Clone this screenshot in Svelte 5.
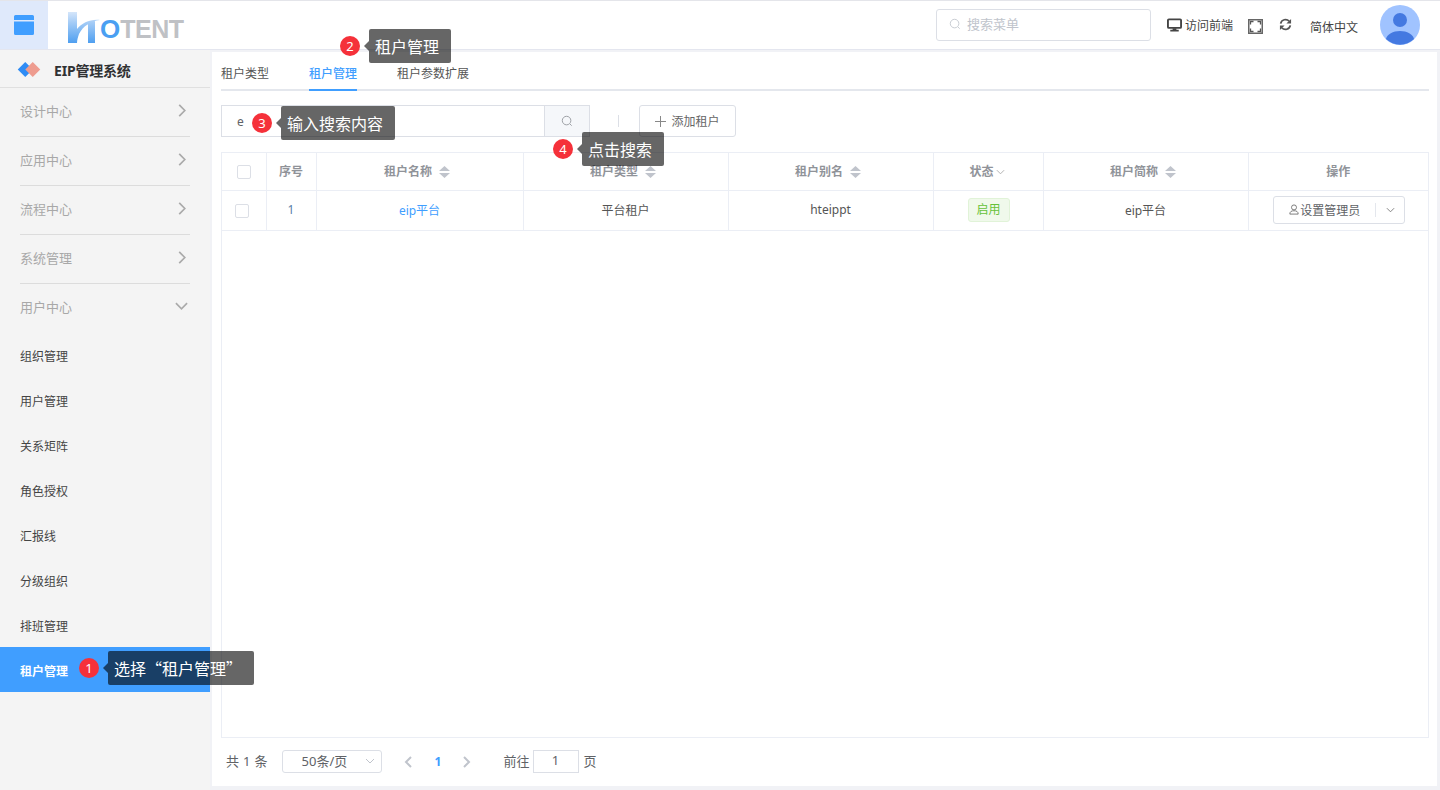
<script lang="ts">
  const groups = ['设计中心', '应用中心', '流程中心', '系统管理'];
  const subs = ['组织管理', '用户管理', '关系矩阵', '角色授权', '汇报线', '分级组织', '排班管理', '租户管理'];
  const tabs = ['租户类型', '租户管理', '租户参数扩展'];
</script>

{#snippet sorter()}
  <svg class="sorter" viewBox="0 0 11 12" width="11" height="12"><path d="M5.500 0l5.500 5H0zM5.500 12L0 7h11z" fill="#c0c4cc"/></svg>
{/snippet}

{#snippet tip(num, text, cls)}
  <div class="tip {cls}">
    <span class="num">{num}</span>
    <span class="bubble">{text}</span>
  </div>
{/snippet}

<div class="page">
  <header class="header">
    <div class="toggle">
      <svg viewBox="0 0 20 20" width="20" height="20"><path d="M1.500 0h17A1.500 1.500 0 0 1 20 1.500V5H0V1.500A1.500 1.500 0 0 1 1.500 0zM0 6.500h20v12a1.500 1.500 0 0 1-1.500 1.500h-17A1.500 1.500 0 0 1 0 18.500z" fill="#409eff"/></svg>
    </div>
    <div class="logo">
      <svg viewBox="0 0 34 32" width="34" height="32">
        <defs>
          <linearGradient id="lg" x1="0" y1="0" x2="0" y2="1">
            <stop offset="0" stop-color="#d5e6fa"/><stop offset=".35" stop-color="#a3cbf6"/><stop offset="1" stop-color="#4f9ff0"/>
          </linearGradient>
        </defs>
        <path d="M0 0h9v17C14 11 22 7 32 8c-9 1-17 6-21 14-1 3-2 6-2 9H0zM20 11l7-2v22h-7z" fill="url(#lg)"/>
      </svg>
      <span class="logo-o">O</span><span class="logo-t">TENT</span>
    </div>
    <div class="spacer"></div>
    <div class="menu-search">
      <svg viewBox="0 0 14 14" width="12" height="12"><circle cx="6.500" cy="6.500" r="5" fill="none" stroke="#c0c4cc" stroke-width="1"/><path d="M10.500 10.500l2 2" stroke="#c0c4cc"/></svg>
      <span>搜索菜单</span>
    </div>
    <div class="front">
      <svg viewBox="0 0 16 14" width="15" height="14"><path d="M2 1h12a1 1 0 0 1 1 1v7a1 1 0 0 1-1 1H2a1 1 0 0 1-1-1V2a1 1 0 0 1 1-1z" fill="none" stroke="#444" stroke-width="2"/><path d="M6 10.500h4V12h2.500v1.800h-9V12H6z" fill="#444"/></svg>
      <span>访问前端</span>
    </div>
    <svg class="full" viewBox="0 0 15 15" width="15" height="15"><rect x=".75" y=".75" width="13.500" height="13.500" fill="none" stroke="#666" stroke-width="1.500"/><path d="M2.500 5.500V2.500h3M9.500 2.500h3v3M12.500 9.500v3h-3M5.500 12.500h-3v-3" fill="none" stroke="#555" stroke-width="1.300"/></svg>
    <svg class="refresh" viewBox="0 0 14 14" width="13" height="13"><path d="M1.800 6A5.300 5.300 0 0 1 11 3.500M12.200 8A5.300 5.300 0 0 1 3 10.500" fill="none" stroke="#555" stroke-width="1.900"/><path d="M13 1v5H8zM1 13V8h5z" fill="#555"/></svg>
    <span class="lang">简体中文</span>
    <div class="avatar">
      <svg viewBox="0 0 40 40" width="40" height="40"><circle cx="20" cy="20" r="20" fill="#a0c3ff"/><circle cx="20" cy="15" r="7" fill="#4479e1"/><path d="M6 34c1-4.500 7-8 14-8s13 3.500 14 8a20 20 0 0 1-28 0z" fill="#4479e1"/></svg>
    </div>
  </header>

  <div class="body">
    <aside class="sidebar">
      <div class="brand">
        <svg viewBox="0 0 24 16" width="24" height="15"><path d="M8 0l8 8-8 8-8-8z" fill="#2f8cf5"/><path d="M16 0l8 8-8 8-8-8z" fill="#ee9c8f"/></svg>
        <span>EIP管理系统</span>
      </div>
      <nav class="groups">
        {#each groups as g}
          <div class="group">
            <span>{g}</span>
            <svg viewBox="0 0 8 14" width="8" height="13"><path d="M1 1l6 6-6 6" fill="none" stroke="#aaa" stroke-width="1.800"/></svg>
          </div>
        {/each}
        <div class="group open">
          <span>用户中心</span>
          <svg viewBox="0 0 14 8" width="13" height="8"><path d="M1 1l6 6 6-6" fill="none" stroke="#aaa" stroke-width="1.800"/></svg>
        </div>
      </nav>
      <ul class="subs">
        {#each subs as s, i}
          <li class:active={i === subs.length - 1}>{s}</li>
        {/each}
      </ul>
    </aside>

    <main class="main">
      <div class="tabs">
        {#each tabs as t, i}
          <span class="tab" class:current={i === 1}>{t}</span>
        {/each}
      </div>

      <div class="toolbar">
        <div class="search">
          <span class="value">e</span>
          <button class="search-btn" aria-label="搜索">
            <svg viewBox="0 0 14 14" width="12" height="12"><circle cx="6.500" cy="6.500" r="5" fill="none" stroke="#909399" stroke-width="1"/><path d="M10.500 10.500l2 2" stroke="#909399"/></svg>
          </button>
        </div>
        <span class="divider"></span>
        <button class="add">
          <svg viewBox="0 0 11 11" width="11" height="11"><path d="M5.500 0v11M0 5.500h11" stroke="#888" stroke-width="1"/></svg>
          添加租户
        </button>
      </div>

      <div class="table-wrap">
        <table>
          <colgroup>
            <col style="width:44px"><col style="width:50px"><col style="width:207px"><col style="width:205px">
            <col style="width:205px"><col style="width:110px"><col style="width:205px"><col>
          </colgroup>
          <thead>
            <tr>
              <th><span class="check"></span></th>
              <th>序号</th>
              <th>租户名称{@render sorter()}</th>
              <th>租户类型{@render sorter()}</th>
              <th>租户别名{@render sorter()}</th>
              <th>状态<svg class="down" viewBox="0 0 10 6" width="9" height="6"><path d="M1 1l4 4 4-4" fill="none" stroke="#aaa"/></svg></th>
              <th>租户简称{@render sorter()}</th>
              <th>操作</th>
            </tr>
          </thead>
          <tbody>
            <tr>
              <td><span class="check left"></span></td>
              <td class="idx">1</td>
              <td class="link">eip平台</td>
              <td>平台租户</td>
              <td>hteippt</td>
              <td><span class="tag">启用</span></td>
              <td>eip平台</td>
              <td class="ops">
                <div class="split">
                  <span class="split-main">
                    <svg viewBox="0 0 12 12" width="10" height="11"><circle cx="6" cy="3.500" r="3" fill="none" stroke="#666"/><path d="M1 11.500c0-3 2-4 5-4s5 1 5 4z" fill="none" stroke="#666"/></svg>
                    设置管理员
                  </span>
                  <span class="split-more">
                    <svg viewBox="0 0 10 6" width="9" height="6"><path d="M1 1l4 4 4-4" fill="none" stroke="#777"/></svg>
                  </span>
                </div>
              </td>
            </tr>
          </tbody>
        </table>
      </div>

      <div class="pager">
        <span class="total txt">共 1 条</span>
        <div class="size">
          <span>50条/页</span>
          <svg viewBox="0 0 10 6" width="10" height="6"><path d="M1 1l4 4 4-4" fill="none" stroke="#c0c4cc"/></svg>
        </div>
        <svg class="prev" viewBox="0 0 8 12" width="8" height="12"><path d="M7 1L2 6l5 5" fill="none" stroke="#c0c4cc" stroke-width="2"/></svg>
        <span class="page-no">1</span>
        <svg class="next" viewBox="0 0 8 12" width="8" height="12"><path d="M1 1l5 5-5 5" fill="none" stroke="#c0c4cc" stroke-width="2"/></svg>
        <span class="goto txt">前往</span>
        <span class="jump">1</span>
        <span class="txt">页</span>
      </div>
    </main>
  </div>

  {@render tip(1, '选择“租户管理”', 't1')}
  {@render tip(2, '租户管理', 't2')}
  {@render tip(3, '输入搜索内容', 't3')}
  {@render tip(4, '点击搜索', 't4')}
</div>

<style>
  :global(body) {
    margin: 0;
    font-family: "Noto Sans", "Noto Sans CJK SC", sans-serif;
  }
  .page {
    position: relative;
    height: 790px;
    overflow: hidden;
    background: #f1f2f6;
    color: #555;
  }
  .header {
    height: 48px;
    display: flex;
    align-items: center;
    background: #fff;
    border-top: 1px solid #e4e5ea;
    border-bottom: 1px solid #e4e6ef;
  }
  .toggle {
    width: 48px;
    height: 48px;
    background: #dfe9fb;
    display: flex;
    align-items: center;
    justify-content: center;
  }
  .logo {
    margin-left: 20px;
    display: flex;
    align-items: flex-end;
    height: 32px;
    margin-top: 6px;
    font-family: "Liberation Sans", sans-serif;
    font-weight: bold;
    font-size: 26px;
    line-height: 30px;
  }
  .logo-o { color: #4a9ff2; margin-left: -2px; }
  .logo-t { color: #bfc1c5; font-size: 25px; letter-spacing: -.5px; }
  .spacer { flex: 1; }
  .menu-search {
    border: 1px solid #dcdfe6;
    border-radius: 3px;
    display: flex;
    align-items: center;
    gap: 6px;
    padding: 0 0 3px 12px;
    box-sizing: border-box;
    width: 215px;
    height: 32px;
    font-size: 13px;
    color: #c0c4cc;
  }
  .front {
    display: flex;
    align-items: center;
    gap: 3px;
    margin-left: 16px;
    font-size: 12px;
    color: #444;
  }
  .full { margin: 2px 0 0 15px; }
  .refresh { margin: -2px 0 0 16px; }
  .lang { margin-left: 18px; font-size: 12px; color: #444; margin-top: 3px; }
  .avatar { margin: 0 20px 0 22px; height: 40px; }

  .body {
    display: flex;
    height: 741px;
  }
  .sidebar {
    width: 210px;
    flex: none;
    background: #f4f4f4;
  }
  .brand {
    height: 35px;
    padding: 2px 0 0 17px;
    display: flex;
    align-items: center;
    gap: 13px;
    border-bottom: 1px solid #e0e0e0;
    font-size: 14px;
    letter-spacing: -.2px;
    font-weight: 700;
    color: #303133;
  }
  .group {
    height: 44px;
    padding: 0 4px 4px 0;
    margin: 0 20px;
    display: flex;
    align-items: center;
    justify-content: space-between;
    border-bottom: 1px solid #dcdcdc;
    font-size: 13px;
    color: #a8a8a8;
  }
  .group.open { border-bottom: 0; padding-right: 2px; }
  .subs {
    list-style: none;
    margin: 0;
    padding: 0;
  }
  .subs li {
    height: 45px;
    line-height: 49px;
    padding-left: 20px;
    font-size: 12px;
    color: #444;
  }
  .subs li.active {
    background: #409eff;
    color: #fff;
    font-weight: 700;
  }

  .main {
    flex: 1;
    margin: 2px 3px 5px 2px;
    background: #fff;
    padding: 0 8px 0 9px;
    display: flex;
    flex-direction: column;
  }
  .tabs {
    display: flex;
    gap: 40px;
    height: 37px;
    border-bottom: 2px solid #e4e7ed;
    font-size: 12px;
  }
  .tab {
    line-height: 44px;
    height: 37px;
    color: #555;
  }
  .tab.current {
    color: #409eff;
    font-weight: 500;
    border-bottom: 2px solid #409eff;
  }
  .toolbar {
    display: flex;
    align-items: center;
    margin-top: 14px;
    height: 32px;
  }
  .search {
    width: 369px;
    height: 32px;
    box-sizing: border-box;
    border: 1px solid #dcdfe6;
    display: flex;
    align-items: center;
    justify-content: space-between;
    font-size: 12px;
    color: #606266;
  }
  .value { padding-left: 15px; }
  .search-btn {
    width: 45px;
    height: 30px;
    border: 0;
    border-left: 1px solid #dcdfe6;
    background: #f5f7fa;
    padding: 0;
    display: flex;
    align-items: center;
    justify-content: center;
  }
  .divider {
    width: 1px;
    height: 12px;
    background: #dcdfe6;
    margin: 0 20px 0 28px;
  }
  .add {
    width: 97px;
    height: 32px;
    border: 1px solid #dcdfe6;
    border-radius: 3px;
    background: #fff;
    padding: 0;
    font: inherit;
    font-size: 12px;
    color: #666;
    display: flex;
    align-items: center;
    justify-content: center;
    gap: 5px;
  }
  .table-wrap {
    margin-top: 15px;
    height: 586px;
    box-sizing: border-box;
    border: 1px solid #ebeef5;
  }
  table {
    width: 100%;
    table-layout: fixed;
    border-collapse: collapse;
    font-size: 12px;
    color: #555;
  }
  th, td {
    border-right: 1px solid #ebeef5;
    border-bottom: 1px solid #ebeef5;
    text-align: center;
    padding: 0;
  }
  th:last-child, td:last-child { border-right: 0; }
  th {
    height: 37px;
    padding-bottom: 1px;
    box-sizing: border-box;
    font-weight: 700;
    color: #909399;
  }
  td { height: 40px; padding-bottom: 1px; box-sizing: border-box; }
  td.ops { padding-left: 2px; }
  .sorter { margin: 0 5px 0 7px; vertical-align: -2px; }
  .down { margin: 0 2px 0 2px; vertical-align: 1px; }
  .check {
    display: inline-block;
    width: 12px;
    height: 12px;
    border: 1px solid #dcdfe6;
    border-radius: 2px;
    background: #fff;
    vertical-align: middle;
  }
  .check.left { margin-right: 4px; }
  .idx { color: #5a7fa8; }
  .link { color: #409eff; }
  .tag {
    display: inline-block;
    vertical-align: middle;
    width: 42px;
    height: 24px;
    margin-left: 1px;
    box-sizing: border-box;
    line-height: 22px;
    background: #f0f9eb;
    border: 1px solid #e1f3d8;
    border-radius: 3px;
    color: #67c23a;
  }
  .split {
    width: 132px;
    height: 28px;
    margin: 0 auto;
    box-sizing: border-box;
    border: 1px solid #dcdfe6;
    border-radius: 3px;
    display: flex;
    align-items: center;
    color: #606266;
  }
  .split-main {
    flex: 1;
    display: flex;
    align-items: center;
    justify-content: center;
    gap: 1px;
  }
  .split-more {
    width: 28px;
    height: 14px;
    border-left: 1px solid #e4e7ed;
    display: flex;
    align-items: center;
    justify-content: center;
  }
  .pager {
    display: flex;
    align-items: center;
    height: 23px;
    margin-top: 12px;
    padding-left: 5px;
    font-size: 13px;
    color: #606266;
  }
  .txt { margin-top: -2px; }
  .total { word-spacing: .7px; }
  .size {
    width: 100px;
    height: 23px;
    box-sizing: border-box;
    margin-left: 14px;
    border: 1px solid #dcdfe6;
    border-radius: 3px;
    display: flex;
    align-items: center;
    justify-content: space-between;
    padding: 0 6px 2px 19px;
  }
  .prev { margin-left: 22px; }
  .page-no { margin: 0 22px 0 23px; color: #409eff; font-weight: 700; font-size: 12px; }
  .goto { margin-left: 32px; }
  .jump {
    width: 46px;
    height: 23px;
    line-height: 19px;
    box-sizing: border-box;
    border: 1px solid #dcdfe6;
    text-align: center;
    margin: 0 5px 0 3px;
  }

  .tip {
    position: absolute;
    display: flex;
    align-items: center;
    gap: 9px;
  }
  .num {
    width: 20px;
    height: 20px;
    border-radius: 50%;
    background: #f5313a;
    color: #fff;
    font-size: 13px;
    line-height: 20px;
    text-align: center;
  }
  .bubble {
    position: relative;
    height: 34px;
    line-height: 34px;
    padding: 0 12px 0 6px;
    border-radius: 2px;
    background: rgba(0, 0, 0, .6);
    color: #fff;
    font-family: "Noto Sans CJK SC", sans-serif;
    font-size: 16px;
    white-space: nowrap;
  }
  .bubble::before {
    content: "";
    position: absolute;
    left: -5px;
    top: 12px;
    border-style: solid;
    border-width: 5px 5px 5px 0;
    border-color: transparent rgba(0, 0, 0, .6) transparent transparent;
  }
  .t1 { left: 79px; top: 651px; }
  .t2 { left: 340px; top: 29px; }
  .t3 { left: 252px; top: 106px; }
  .t4 { left: 553px; top: 132px; }
</style>
